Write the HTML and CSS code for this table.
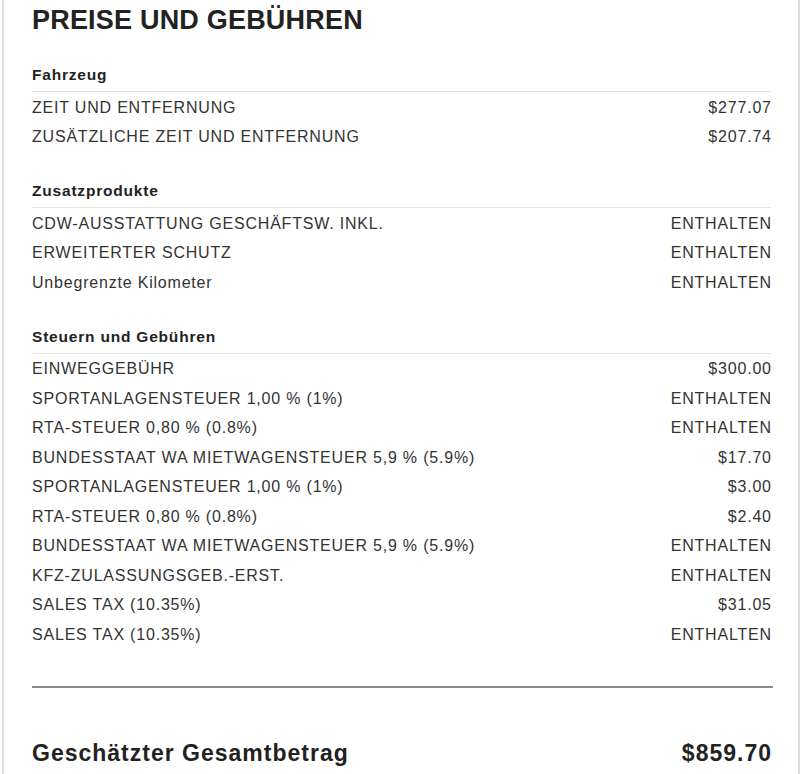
FILE: index.html
```html
<!DOCTYPE html>
<html lang="de">

<head>
    <meta charset="UTF-8">
    <meta name="viewport" content="width=device-width, initial-scale=1.0">
    <title>Preise und Gebühren</title>
    <link rel="stylesheet" href="styles.css">
</head>

<body>
    <div class="panel">
        <h2 class="panel-title">PREISE UND GEBÜHREN</h2>

        <div class="section">
            <div class="section-head">Fahrzeug</div>
            <div class="row"><span>ZEIT UND ENTFERNUNG</span><span>$277.07</span></div>
            <div class="row"><span>ZUSÄTZLICHE ZEIT UND ENTFERNUNG</span><span>$207.74</span></div>
        </div>

        <div class="section">
            <div class="section-head">Zusatzprodukte</div>
            <div class="row"><span>CDW-AUSSTATTUNG GESCHÄFTSW. INKL.</span><span>ENTHALTEN</span></div>
            <div class="row"><span>ERWEITERTER SCHUTZ</span><span>ENTHALTEN</span></div>
            <div class="row"><span>Unbegrenzte Kilometer</span><span>ENTHALTEN</span></div>
        </div>

        <div class="section">
            <div class="section-head">Steuern und Gebühren</div>
            <div class="row"><span>EINWEGGEBÜHR</span><span>$300.00</span></div>
            <div class="row"><span>SPORTANLAGENSTEUER 1,00 % (1%)</span><span>ENTHALTEN</span></div>
            <div class="row"><span>RTA-STEUER 0,80 % (0.8%)</span><span>ENTHALTEN</span></div>
            <div class="row"><span>BUNDESSTAAT WA MIETWAGENSTEUER 5,9 % (5.9%)</span><span>$17.70</span></div>
            <div class="row"><span>SPORTANLAGENSTEUER 1,00 % (1%)</span><span>$3.00</span></div>
            <div class="row"><span>RTA-STEUER 0,80 % (0.8%)</span><span>$2.40</span></div>
            <div class="row"><span>BUNDESSTAAT WA MIETWAGENSTEUER 5,9 % (5.9%)</span><span>ENTHALTEN</span></div>
            <div class="row"><span>KFZ-ZULASSUNGSGEB.-ERST.</span><span>ENTHALTEN</span></div>
            <div class="row"><span>SALES TAX (10.35%)</span><span>$31.05</span></div>
            <div class="row"><span>SALES TAX (10.35%)</span><span>ENTHALTEN</span></div>
        </div>

        <div class="total">
            <span>Geschätzter Gesamtbetrag</span>
            <span>$859.70</span>
        </div>
    </div>
</body>

</html>
```

FILE: styles.css
```css
body {
    font-family: "Liberation Sans", Arial, sans-serif;
    color: #333333;
    background-color: #ffffff;
    margin: 0;
}

.panel {
    width: 739px;
    min-height: 774px;
    margin-left: 2px;
    padding: 5px 27px 0 28px;
    border-left: 2px solid #dcdcdc;
    border-right: 2px solid #dcdcdc;
    box-sizing: content-box;
}

.panel-title {
    font-size: 27px;
    font-weight: bold;
    line-height: 31px;
    letter-spacing: 0.2px;
    color: #222222;
    margin: 0 0 29px 0;
}

.section {
    margin-bottom: 30px;
}

.section-head {
    font-size: 15.5px;
    font-weight: bold;
    line-height: 20px;
    letter-spacing: 0.8px;
    padding-bottom: 6px;
    border-bottom: 1px solid #e2e2e2;
    color: #222222;
}

.row {
    display: flex;
    justify-content: space-between;
    align-items: center;
    height: 29.5px;
    padding-top: 1.5px;
    box-sizing: border-box;
    font-size: 16px;
    letter-spacing: 0.8px;
}

.row span:last-child {
    margin-right: -0.8px;
}

.total {
    display: flex;
    justify-content: space-between;
    align-items: center;
    margin-top: 37px;
    width: 741px;
    border-top: 2px solid #8a8a8a;
    padding-top: 52px;
    font-size: 23px;
    font-weight: bold;
    letter-spacing: 1px;
    color: #222222;
}

.total span:last-child {
    margin-right: 1px;
}
```
